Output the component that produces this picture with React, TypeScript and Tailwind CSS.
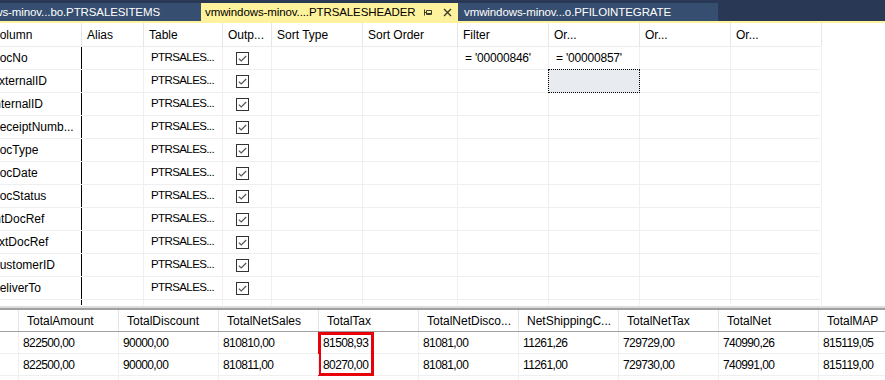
import React from "react";

// top designer grid columns (width includes the right grid line)
const TOP_COLS = [
  { title: "Column", w: "w-[82px]" },
  { title: "Alias", w: "w-[62px]" },
  { title: "Table", w: "w-[79px]" },
  { title: "Outp...", w: "w-[49px]" },
  { title: "Sort Type", w: "w-[91px]" },
  { title: "Sort Order", w: "w-[95px]" },
  { title: "Filter", w: "w-[91px]" },
  { title: "Or...", w: "w-[91px]" },
  { title: "Or...", w: "w-[91px]" },
  { title: "Or...", w: "w-[91px]" },
];

const FIELDS = [
  "DocNo", "ExternalID", "InternalID", "ReceiptNumb...", "DocType", "DocDate",
  "DocStatus", "IntDocRef", "ExtDocRef", "CustomerID", "DeliverTo", "",
];

const RESULT_COLS = [
  "TotalAmount", "TotalDiscount", "TotalNetSales", "TotalTax", "TotalNetDisco...",
  "NetShippingC...", "TotalNetTax", "TotalNet", "TotalMAP",
];

const RESULT_ROWS = [
  ["822500,00", "90000,00", "810810,00", "81508,93", "81081,00", "11261,26", "729729,00", "740990,26", "815119,05"],
  ["822500,00", "90000,00", "810811,00", "80270,00", "81081,00", "11261,00", "729730,00", "740991,00", "815119,00"],
  ["", "", "", "", "", "", "", "", ""],
];

function Check() {
  return (
    <svg width="13" height="13" viewBox="0 0 13 13">
      <rect x="0.5" y="0.5" width="12" height="12" fill="white" stroke="#333" />
      <polyline points="2.8,6.6 5.2,9 10.2,4" fill="none" stroke="#555" strokeWidth="1.2" />
    </svg>
  );
}

function Pin() {
  return (
    <svg width="10" height="9" viewBox="0 0 10 9">
      <path d="M1.5 1.5v6M1.5 4.5h2M3.5 2.5h5v4h-5zM3.5 5.5h5" fill="none" stroke="#3b3b2a" strokeWidth="1" />
    </svg>
  );
}

function Close() {
  return (
    <svg width="9" height="9" viewBox="0 0 9 9">
      <path d="M1 1l7 7M8 1L1 8" stroke="#3b3b2a" strokeWidth="1.4" />
    </svg>
  );
}

function TabBar() {
  return (
    <div className="h-[23px] bg-[#293955] flex flex-col">
      <div className="h-[3px]" />
      <div className="h-[18px] flex text-[11.5px] tracking-[-0.1px] leading-[18px]">
        <div className="w-[201px] bg-[#364e6f] text-white flex justify-end pr-[41px] overflow-hidden whitespace-nowrap">
          <span>vmwindows-minov...bo.PTRSALESITEMS</span>
        </div>
        <div className="w-[257px] bg-[#fff29d] text-black flex items-center pl-[4px] overflow-hidden whitespace-nowrap">
          <span>vmwindows-minov....PTRSALESHEADER</span>
          <div className="ml-auto flex items-center gap-[10px] pr-[6px]">
            <Pin />
            <Close />
          </div>
        </div>
        <div className="w-[260px] bg-[#364e6f] text-white pl-[6px] overflow-hidden whitespace-nowrap">
          vmwindows-minov...o.PFILOINTEGRATE
        </div>
      </div>
      <div className="h-[2px] bg-[#fff29d]" />
    </div>
  );
}

function TopGrid() {
  return (
    <div className="h-[282px] overflow-hidden">
      <div className="flex h-[24px] w-[821px] border-b border-[#ececec]">
        {TOP_COLS.map((c, i) => (
          <div key={i} className={`${c.w} shrink-0 border-r border-[#e6e6e6] flex items-center overflow-hidden whitespace-nowrap ${i === 0 ? "" : "pl-[5px]"}`}>
            <span className={i === 0 ? "-ml-[9px]" : ""}>{c.title}</span>
          </div>
        ))}
      </div>
      {FIELDS.map((f, r) => (
        <div key={r} className="flex h-[23px] w-[821px] border-b border-[#efefef]">
          {TOP_COLS.map((c, i) => {
            let content: React.ReactNode = null;
            if (i === 0) content = <span className="-ml-[9px]">{f}</span>;
            if (i === 2 && r < 11) content = <span className="text-[11.5px] tracking-[-0.6px]">PTRSALES...</span>;
            if (i === 3 && r < 11) content = <div className="pl-[13px] pt-[1px]"><Check /></div>;
            if (i === 6 && r === 0) content = <span className="tracking-[-0.2px]">= '00000846'</span>;
            if (i === 7 && r === 0) content = <span className="tracking-[-0.2px]">= '00000857'</span>;
            const selected = i === 7 && r === 1;
            return (
              <div
                key={i}
                className={`${c.w} shrink-0 relative border-r ${i === 0 ? "border-black" : "border-[#efefef]"} flex items-center whitespace-nowrap ${selected ? "" : "overflow-hidden"} ${i === 0 || i === 3 ? "" : "pl-[7px]"}`}
              >
                {selected && (
                  <div className="absolute left-[-1px] top-[-1px] right-[-1px] bottom-[-1px] border border-dotted border-black bg-[#e8ecf0]" />
                )}
                {content}
              </div>
            );
          })}
        </div>
      ))}
    </div>
  );
}

function ResultGrid() {
  return (
    <div className="flex-1 overflow-hidden">
      <div className="flex h-[22px] border-b border-[#a0a0a0] w-[918px]">
        <div className="w-[19px] shrink-0 border-r border-[#e4e4e4]" />
        {RESULT_COLS.map((c) => (
          <div key={c} className="w-[100px] shrink-0 border-r border-[#e4e4e4] pl-[8px] flex items-center whitespace-nowrap overflow-hidden">
            {c}
          </div>
        ))}
      </div>
      {RESULT_ROWS.map((row, r) => (
        <div key={r} className="flex h-[22px] border-b border-[#efefef] w-[918px]">
          <div className="w-[19px] shrink-0 border-r border-[#efefef]" />
          {row.map((v, i) => (
            <div key={i} className="w-[100px] shrink-0 relative border-r border-[#efefef] pl-[4px] flex items-center whitespace-nowrap tracking-[-0.6px]">
              {i === 3 && r === 0 && (
                <div className="absolute left-[-1px] top-0 w-[56px] h-[44px] border-[3px] border-[#e8000b]" />
              )}
              {v}
            </div>
          ))}
        </div>
      ))}
    </div>
  );
}

export default function App() {
  return (
    <div
      className="w-[885px] h-[380px] overflow-hidden bg-white text-black text-[12px] flex flex-col"
      style={{ fontFamily: '"Liberation Sans", Arial, sans-serif' }}
    >
      <TabBar />
      <TopGrid />
      <div className="h-[1px] bg-white" />
      <div className="h-[2px] bg-[#dcdcdc]" />
      <div className="h-[2px] bg-[#a0a0a0]" />
      <ResultGrid />
    </div>
  );
}
